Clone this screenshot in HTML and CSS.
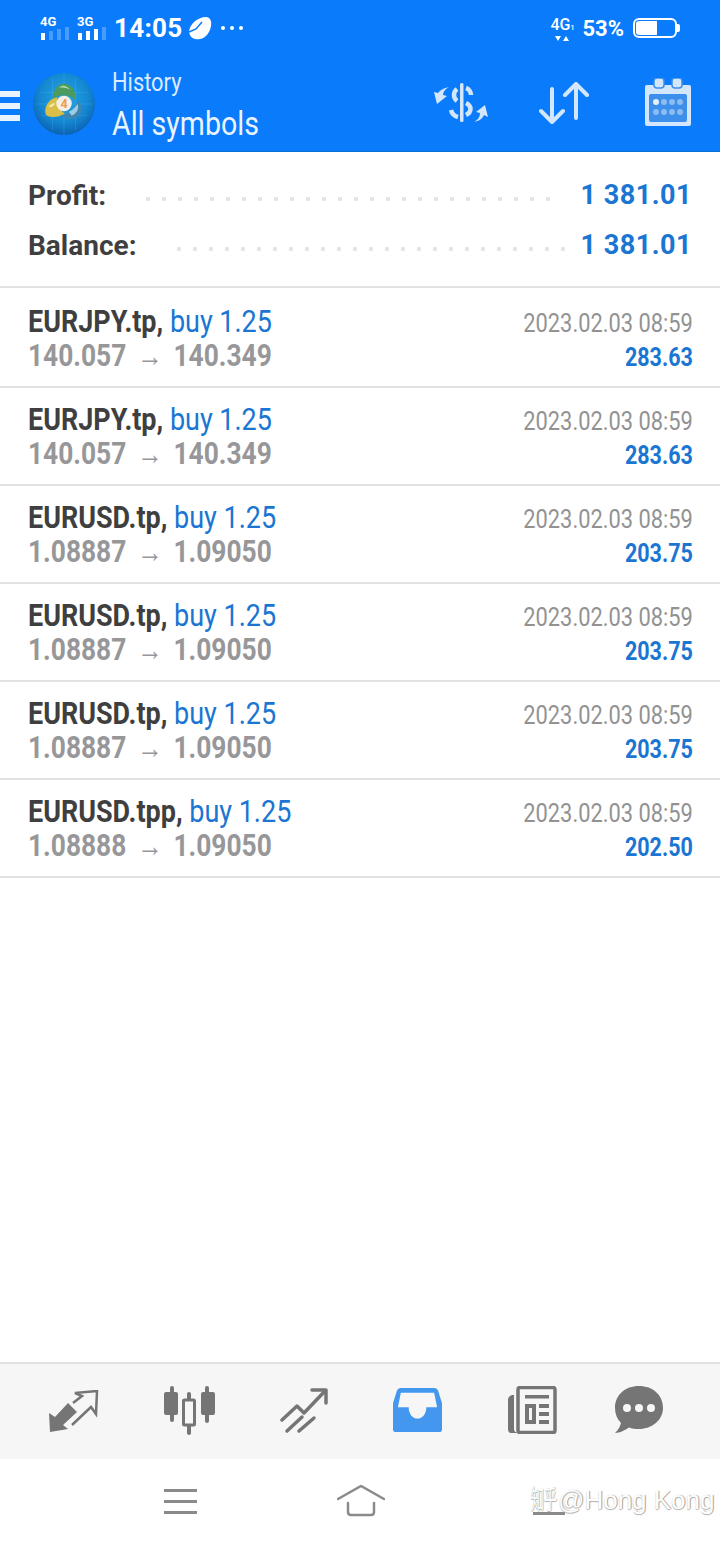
FILE: index.html
```html
<!DOCTYPE html>
<html lang="en">
<head>
  <meta charset="UTF-8" />
  <title>History</title>
  <link rel="stylesheet" href="styles.css">
</head>
<body>
  <div class="top">
    <div class="status">
      <div class="status-left">
        <div class="net">
          <span class="net-label">4G</span>
          <svg width="30" height="13" viewBox="0 0 30 13"><rect x="1" y="6" width="4" height="7" fill="#fff"/><rect x="9" y="4" width="4" height="9" fill="#fff" opacity=".25"/><rect x="17" y="2" width="4" height="11" fill="#fff" opacity=".25"/><rect x="25" y="0" width="4" height="13" fill="#fff" opacity=".25"/></svg>
        </div>
        <div class="net">
          <span class="net-label">3G</span>
          <svg width="30" height="13" viewBox="0 0 30 13"><rect x="1" y="6" width="4" height="7" fill="#fff"/><rect x="9" y="4" width="4" height="9" fill="#fff"/><rect x="17" y="2" width="4" height="11" fill="#fff"/><rect x="25" y="0" width="4" height="13" fill="#fff" opacity=".25"/></svg>
        </div>
        <span class="clock">14:05</span>
        <svg class="leaf" width="24" height="24" viewBox="0 0 24 24">
          <path d="M18 1C22 1 24 5 23 10C22 16 18 22 12 23C7 24 3 22 2 19C0 15 2 10 6 6C9 3 14 1 18 1Z" fill="#fff"/>
          <path d="M1 16L8 13L14 6" fill="none" stroke="#0a7bfb" stroke-width="1.500"/>
        </svg>
        <span class="more"><i></i><i></i><i></i></span>
      </div>
      <div class="status-right">
        <div class="net-4g">
          <span>4G<small>1</small></span>
          <svg width="14" height="6" viewBox="0 0 14 6"><path d="M0 0H6L3 5ZM8 5L11 0L14 5Z" fill="#fff"/></svg>
        </div>
        <span class="percent">53%</span>
        <div class="battery"><div class="battery-level"></div></div>
      </div>
    </div>
    <div class="toolbar">
      <div class="burger"><i></i><i></i><i></i></div>
      <svg class="logo" width="62" height="64" viewBox="0 0 64 64">
        <defs>
          <radialGradient id="globe" cx=".5" cy=".4" r=".6">
            <stop offset="0" stop-color="#28a6e4"/>
            <stop offset=".65" stop-color="#1488d2"/>
            <stop offset="1" stop-color="#0c62b4"/>
          </radialGradient>
        </defs>
        <circle cx="32" cy="32" r="32" fill="url(#globe)"/>
        <path d="M8 20H56M3 32H61M8 44H56M20 5V59M32 0V64M44 5V59" stroke="#5cbcec" stroke-width=".6" opacity=".45"/>
        <path d="M20 27C21 17 26 11 32 11C39 11 45 18 44 28C38 22 27 21 20 27Z" fill="#4d9a5e"/>
        <path d="M27 15C30 12 35 13 38 17C34 15 30 15 27 15Z" fill="#a9d9a4"/>
        <path d="M25 25C17 26 11 35 13 42C15 47 26 46 33 42C27 38 24 32 25 25Z" fill="#d9bf47"/>
        <path d="M16 35C18 32 21 31 23 31C22 34 19 36 16 35Z" fill="#f4e8a2"/>
        <path d="M46 29C52 33 52 42 45 46C38 49 32 47 28 43C36 45 44 38 46 29Z" fill="#3d85b0"/>
        <path d="M37 40C41 38 44 35 46 32C48 37 45 42 40 44Z" fill="#9ccbe2"/>
        <circle cx="32" cy="31.500" r="8" fill="#f6efe6"/>
        <text class="logo-num" x="32" y="36">4</text>
      </svg>
      <div class="titles">
        <div class="title-small">History</div>
        <div class="title-big">All symbols</div>
      </div>
      <div class="actions">
        <svg width="54" height="42" viewBox="0 0 54 42">
          <rect x="26" y="0" width="3.500" height="39" rx="1.500" fill="#d3e6fb"/>
          <g fill="none" stroke="#d3e6fb" stroke-width="4.500">
            <path d="M23 6C19 9 19 15 23 18"/>
            <path d="M32 5C35 6 37 9 37 12"/>
            <path d="M32 20C38 23 38 29 32 32"/>
            <path d="M17 27C18 31 20 33 24 34"/>
          </g>
          <path d="M15 4C11 6 9 9 9 12L13 13L3 21L0 9L4 10C6 7 10 5 15 4Z" fill="#d3e6fb"/>
          <path d="M40 39C44 37 46 34 46 30L42 29L51 22L54 34L50 32C48 36 45 38 40 39Z" fill="#d3e6fb"/>
        </svg>
        <svg width="52" height="44" viewBox="0 0 52 44" fill="none" stroke="#d3e6fb" stroke-width="4" stroke-linecap="round" stroke-linejoin="round">
          <path d="M13 7V40M2 29L13 40L24 29"/>
          <path d="M37 36V2M26 13L37 2L48 13"/>
        </svg>
        <svg width="46" height="48" viewBox="0 0 46 48">
          <rect x="0" y="7" width="46" height="41" rx="2" fill="#d3e6fb"/>
          <rect x="4" y="16" width="38" height="28" rx="2" fill="#3d8fec"/>
          <rect x="9" y="0" width="10" height="10" rx="3" fill="#d3e6fb" stroke="#3d8fec" stroke-width="1.500"/>
          <rect x="27" y="0" width="10" height="10" rx="3" fill="#d3e6fb" stroke="#3d8fec" stroke-width="1.500"/>
          <g fill="#8dbcf3">
            <circle cx="11" cy="24" r="3" fill="#e6f0fc"/><circle cx="19" cy="24" r="3"/><circle cx="27" cy="24" r="3"/><circle cx="35" cy="24" r="3"/>
            <circle cx="11" cy="34" r="3"/><circle cx="19" cy="34" r="3"/><circle cx="27" cy="34" r="3"/><circle cx="35" cy="34" r="3"/>
          </g>
        </svg>
      </div>
    </div>
  </div>

  <div class="summary">
    <div class="summary-row">
      <span class="summary-label">Profit:</span>
      <span class="dots dots-short"></span>
      <span class="summary-value">1 381.01</span>
    </div>
    <div class="summary-row">
      <span class="summary-label">Balance:</span>
      <span class="dots"></span>
      <span class="summary-value">1 381.01</span>
    </div>
  </div>

  <div class="deals">
    <div class="deal deal-first">
      <div class="deal-left">
        <div class="deal-head"><b>EURJPY.tp,</b> <span>buy 1.25</span></div>
        <div class="deal-price">140.057 <em>→</em> 140.349</div>
      </div>
      <div class="deal-right">
        <div class="deal-time">2023.02.03 08:59</div>
        <div class="deal-profit">283.63</div>
      </div>
    </div>
    <div class="deal">
      <div class="deal-left">
        <div class="deal-head"><b>EURJPY.tp,</b> <span>buy 1.25</span></div>
        <div class="deal-price">140.057 <em>→</em> 140.349</div>
      </div>
      <div class="deal-right">
        <div class="deal-time">2023.02.03 08:59</div>
        <div class="deal-profit">283.63</div>
      </div>
    </div>
    <div class="deal">
      <div class="deal-left">
        <div class="deal-head"><b>EURUSD.tp,</b> <span>buy 1.25</span></div>
        <div class="deal-price">1.08887 <em>→</em> 1.09050</div>
      </div>
      <div class="deal-right">
        <div class="deal-time">2023.02.03 08:59</div>
        <div class="deal-profit">203.75</div>
      </div>
    </div>
    <div class="deal">
      <div class="deal-left">
        <div class="deal-head"><b>EURUSD.tp,</b> <span>buy 1.25</span></div>
        <div class="deal-price">1.08887 <em>→</em> 1.09050</div>
      </div>
      <div class="deal-right">
        <div class="deal-time">2023.02.03 08:59</div>
        <div class="deal-profit">203.75</div>
      </div>
    </div>
    <div class="deal">
      <div class="deal-left">
        <div class="deal-head"><b>EURUSD.tp,</b> <span>buy 1.25</span></div>
        <div class="deal-price">1.08887 <em>→</em> 1.09050</div>
      </div>
      <div class="deal-right">
        <div class="deal-time">2023.02.03 08:59</div>
        <div class="deal-profit">203.75</div>
      </div>
    </div>
    <div class="deal">
      <div class="deal-left">
        <div class="deal-head"><b>EURUSD.tpp,</b> <span>buy 1.25</span></div>
        <div class="deal-price">1.08888 <em>→</em> 1.09050</div>
      </div>
      <div class="deal-right">
        <div class="deal-time">2023.02.03 08:59</div>
        <div class="deal-profit">202.50</div>
      </div>
    </div>
  </div>

  <div class="tabs">
    <svg width="50" height="46" viewBox="0 0 50 46">
      <path d="M0 23L1 42L19 39L14 35L28 22L19 13L6 27Z" fill="#757575"/>
      <path d="M24 13L33 6L26 3L48 1L47 24L42 17L23 35" fill="none" stroke="#757575" stroke-width="2.500"/>
    </svg>
    <svg width="51" height="50" viewBox="0 0 51 50" fill="#757575">
      <rect x="6" y="0" width="4" height="36" rx="2"/>
      <rect x="0" y="6" width="14" height="23" rx="2"/>
      <rect x="23" y="6" width="4" height="43" rx="2"/>
      <rect x="19.500" y="14" width="11" height="25" rx="1" fill="#f6f6f6" stroke="#757575" stroke-width="3"/>
      <rect x="41" y="0" width="4" height="37" rx="2"/>
      <rect x="37" y="6" width="14" height="23" rx="2"/>
    </svg>
    <svg width="48" height="46" viewBox="0 0 48 46" fill="none" stroke="#757575" stroke-width="3.500" stroke-linecap="round" stroke-linejoin="round">
      <path d="M2 32L17 18L24 25L45 3"/>
      <path d="M32 2H46V15"/>
      <path d="M7 43L22 29M19 43L34 30"/>
    </svg>
    <svg width="49" height="44" viewBox="0 0 50 46" preserveAspectRatio="none">
      <path d="M8 0H42C44 0 45 1 46 3L50 16V43C50 45 49 46 47 46H3C1 46 0 45 0 43V16L4 3C5 1 6 0 8 0Z" fill="#4497ef"/>
      <path d="M8 5H42L45 20H34C34 27 30 32 25 32C20 32 16 27 16 20H5Z" fill="#f6f6f6"/>
    </svg>
    <svg width="50" height="48" viewBox="0 0 50 48">
      <rect x="11" y="1.500" width="37" height="45" rx="2" fill="none" stroke="#757575" stroke-width="3.500"/>
      <path d="M7 9V43C7 45 8 46 11 47H4C2 47 1 45 1 43V14C1 11 3 9 7 9Z" fill="#757575"/>
      <rect x="18" y="9" width="24" height="3.500" fill="#757575"/>
      <rect x="18" y="18" width="11" height="20" fill="#757575"/>
      <rect x="22" y="22" width="3" height="12" fill="#f6f6f6"/>
      <rect x="32" y="18" width="10" height="4" fill="#757575"/>
      <rect x="32" y="26" width="10" height="4" fill="#757575"/>
      <rect x="32" y="34" width="10" height="4" fill="#757575"/>
    </svg>
    <svg width="50" height="48" viewBox="0 0 50 48">
      <path d="M25 0C39 0 49 9 49 22C49 34 38 43 25 43C21 43 18 42.500 15 41.500C11 44 6 47 1 47C4 44 6 41 7 37C3 33 1 28 1 22C1 9 11 0 25 0Z" fill="#757575"/>
      <circle cx="13" cy="22" r="4" fill="#f6f6f6"/><circle cx="25" cy="22" r="4" fill="#f6f6f6"/><circle cx="37" cy="22" r="4" fill="#f6f6f6"/>
    </svg>
  </div>

  <div class="navbar">
    <div class="nav-menu"><i></i><i></i><i></i></div>
    <svg class="nav-home" width="48" height="32" viewBox="0 0 48 32" fill="none" stroke="#8a8a8a" stroke-width="2.500" stroke-linecap="round" stroke-linejoin="round">
      <path d="M1 14L24 1L47 14"/>
      <path d="M11 18V27C11 29 12 30 14 30H34C36 30 37 29 37 27V18"/>
    </svg>
    <div class="nav-back"></div>
    <div class="watermark"><span class="watermark-cjk">知乎</span>@Hong Kong</div>
  </div>
</body>
</html>
```

FILE: styles.css
```css
* {
  box-sizing: border-box;
}

html, body {
  margin: 0;
  padding: 0;
  height: 100%;
  background: #fff;
  font-family: Roboto, sans-serif;
}

body {
  display: flex;
  flex-direction: column;
  height: 1544px;
  overflow: hidden;
}

/* top blue area */
.top {
  background: #0a7bfb;
  height: 152px;
  flex: none;
  color: #fff;
  border-bottom: 1px solid #0b6fd8;
}

.status {
  height: 60px;
  padding: 11px 43px 0 40px;
  display: flex;
  justify-content: space-between;
}

.status-left, .status-right {
  display: flex;
  align-items: center;
  height: 34px;
}

.net {
  width: 37px;
  display: flex;
  flex-direction: column;
  margin-top: -1px;
}

.net-label {
  font-size: 13px;
  line-height: 11px;
  font-weight: 700;
  color: #fff;
}

.clock {
  font-size: 26px;
  font-weight: 700;
  letter-spacing: .3px;
}

.leaf {
  margin-left: 5px;
}

.more {
  display: flex;
  gap: 5px;
  margin-left: 9px;
}

.more i {
  width: 4px;
  height: 4px;
  border-radius: 50%;
  background: #fff;
}

.net-4g {
  display: flex;
  flex-direction: column;
  align-items: center;
  font-size: 16px;
  line-height: 15px;
  font-weight: 500;
  margin-right: 8px;
  margin-top: 2px;
}

.net-4g small {
  font-size: 7px;
}

.percent {
  font-size: 22px;
  font-weight: 700;
  margin-right: 9px;
}

.battery {
  width: 44px;
  height: 20px;
  border: 2px solid #fff;
  border-radius: 6px;
  padding: 1px;
  position: relative;
}

.battery::after {
  content: "";
  position: absolute;
  right: -5px;
  top: 4px;
  width: 3px;
  height: 8px;
  background: #fff;
  border-radius: 0 2px 2px 0;
}

.battery-level {
  width: 21px;
  height: 100%;
  background: #fff;
  border-radius: 3px 0 0 3px;
}

.toolbar {
  height: 91px;
  display: flex;
  align-items: flex-start;
}

.burger {
  width: 20px;
  margin-top: 31px;
  display: flex;
  flex-direction: column;
  gap: 6px;
}

.burger i {
  height: 6px;
  background: #e9f3ff;
}

.logo {
  margin: 12px 0 0 13px;
}

.titles {
  margin: 6px 0 0 17px;
  transform: scaleX(.84);
  transform-origin: left;
}

.title-small {
  font-size: 26px;
  line-height: 32px;
  color: #dcebff;
}

.title-big {
  font-size: 34px;
  line-height: 44px;
  margin-top: 3px;
  color: #eaf4ff;
  white-space: nowrap;
}

.logo-num {
  font-family: Roboto, sans-serif;
  font-size: 13px;
  font-weight: 700;
  fill: #ec9a55;
  text-anchor: middle;
}

.actions {
  margin-left: auto;
  margin-right: 29px;
  display: flex;
  align-items: flex-start;
  padding-top: 18px;
}

.actions svg:nth-child(1) {
  margin-top: 5px;
  margin-right: 51px;
}

.actions svg:nth-child(2) {
  margin-top: 4px;
  margin-right: 54px;
}

/* summary */
.summary {
  height: 136px;
  flex: none;
  padding: 18px 28px 0 28px;
  border-bottom: 2px solid #e2e2e2;
}

.summary-row {
  height: 50px;
  display: flex;
  align-items: center;
}

.summary-label {
  font-size: 28px;
  font-weight: 700;
  color: #3f3f3f;
  margin-right: 40px;
}

.dots {
  flex: 1;
  height: 4px;
  margin-top: 8px;
  margin-right: 16px;
  background: radial-gradient(circle at 2px 2px, #e4e4e4 2px, transparent 2.500px) left top / 16px 4px repeat-x;
}

.dots-short {
  margin-right: 30px;
}

.summary-value {
  font-size: 27px;
  font-weight: 700;
  color: #1a76d2;
  letter-spacing: .5px;
}

/* deals */
.deal {
  height: 98px;
  flex: none;
  padding: 15px 27px 0 28px;
  border-bottom: 2px solid #e2e2e2;
  display: flex;
  justify-content: space-between;
}

.deal-first {
  height: 100px;
  padding-top: 17px;
}

.deal-head, .deal-price {
  font-size: 31px;
  line-height: 34px;
  white-space: nowrap;
  transform: scaleX(.87);
  transform-origin: left;
}

.deal-head b {
  color: #3f3f3f;
  font-weight: 700;
}

.deal-head span {
  color: #1a76d2;
}

.deal-price {
  font-weight: 700;
  color: #97979a;
  transform: scaleX(.85);
}

.deal-price em {
  font-style: normal;
  font-weight: 400;
  font-size: 30px;
  margin: 0 5px;
}

.deal-right {
  text-align: right;
}

.deal-time {
  transform: scaleX(.84);
  transform-origin: right;
  white-space: nowrap;
  font-size: 26px;
  line-height: 34px;
  margin-top: 1px;
  color: #929292;
}

.deal-profit {
  transform: scaleX(.86);
  transform-origin: right;
  white-space: nowrap;
  font-size: 25px;
  line-height: 34px;
  margin-top: 1px;
  font-weight: 700;
  color: #1a76d2;
}

/* bottom */
.tabs {
  margin-top: auto;
  height: 97px;
  flex: none;
  background: #f6f6f6;
  border-top: 2px solid #e2e2e2;
  display: flex;
  align-items: flex-start;
  padding: 22px 0 0 49px;
  gap: 65px;
}

.tabs svg:nth-child(1) { margin-top: 4px; }
.tabs svg:nth-child(3) { margin-top: 2px; }
.tabs svg:nth-child(4) { margin-top: 2px; }
.tabs svg:nth-child(5) { margin-right: -8px; }

.navbar {
  height: 85px;
  flex: none;
  background: #fff;
  position: relative;
  display: flex;
  align-items: flex-start;
  padding: 28px 0 0 164px;
}

.nav-menu {
  width: 33px;
  display: flex;
  flex-direction: column;
  gap: 8px;
  margin-top: 2px;
}

.nav-menu i {
  height: 3px;
  background: #8a8a8a;
}

.nav-home {
  margin-left: 140px;
  margin-top: -2px;
}

.nav-back {
  width: 32px;
  height: 3px;
  background: #8a8a8a;
  margin: 25px 0 0 148px;
}

.watermark {
  position: absolute;
  left: 531px;
  top: 24px;
  font-family: "Liberation Sans", "Noto Sans CJK SC", sans-serif;
  font-size: 26px;
  line-height: 34px;
  color: #fff;
  white-space: nowrap;
  text-shadow: 1px 0 1px #9a9a9a, 0 1px 1px #b4b4b4;
}

.watermark-cjk {
  display: inline-block;
  width: 27px;
  transform: scaleX(.5);
  transform-origin: left;
}
```
